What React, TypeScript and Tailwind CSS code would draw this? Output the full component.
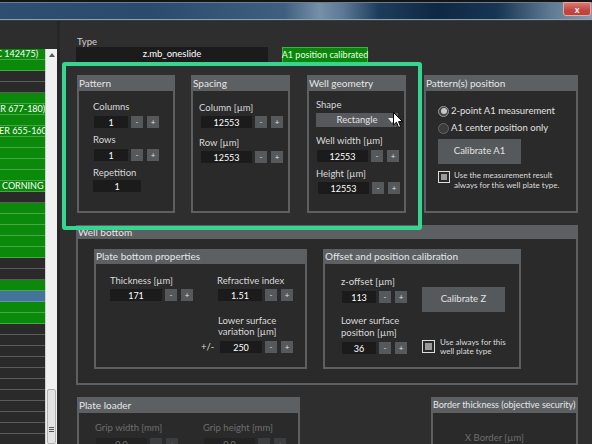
import React from "react";

const FONT = { fontFamily: '"Lato", "Noto Sans", "Liberation Sans", sans-serif' };

function Btn({ c, dim }: { c: string; dim?: boolean }) {
  return (
    <div
      className={`w-[12px] h-[12px] flex items-center justify-center text-[8px] leading-none ${
        dim ? "bg-[#3b3d3f] text-[#6a6a6a]" : "bg-[#55595c] text-[#e2e2e2]"
      }`}
    >
      {c}
    </div>
  );
}

function Spin({ w, v, dim, nobtn }: { w: string; v: string; dim?: boolean; nobtn?: boolean }) {
  return (
    <div className="flex items-center">
      <div
        className={`${w} h-[12px] flex items-center justify-center text-[9px] leading-none ${
          dim ? "bg-[#232323] text-[#707070]" : "bg-[#1b1b1b] text-white"
        }`}
      >
        {v}
      </div>
      {!nobtn && (
        <>
          <div className="ml-[3px]">
            <Btn c="-" dim={dim} />
          </div>
          <div className="ml-[4px]">
            <Btn c="+" dim={dim} />
          </div>
        </>
      )}
    </div>
  );
}

function Label({ children, className = "", dim }: { children: React.ReactNode; className?: string; dim?: boolean }) {
  return (
    <div className={`h-[12px] leading-[12px] text-[9.5px] whitespace-nowrap ${dim ? "text-[#6e6e6e]" : "text-[#d9d9d9]"} ${className}`}>
      {children}
    </div>
  );
}

function Group({
  title,
  hh,
  className,
  bodyClass = "",
  titleClass = "text-[10px]",
  children,
}: {
  title: string;
  hh: string;
  className: string;
  bodyClass?: string;
  titleClass?: string;
  children?: React.ReactNode;
}) {
  return (
    <div className={`flex flex-col bg-[#5c6063] px-[2px] pb-[2px] ${className}`}>
      <div className={`${hh} ${titleClass} shrink-0 text-[#e6e6e6] flex items-center whitespace-nowrap overflow-hidden`}>
        {title}
      </div>
      <div className={`flex-1 bg-[#2a2a2a] ${bodyClass}`}>{children}</div>
    </div>
  );
}

function Check({ size }: { size: string }) {
  return (
    <div className={`${size} shrink-0 border border-[#dcdcdc] p-[2px] bg-[#2a2a2a]`}>
      <div className="w-full h-full bg-[#9a9a9a]" />
    </div>
  );
}

type Row = { t: "g" | "d" | "b"; s?: string; c?: string };
const rows: Row[] = [
  { t: "g", s: "C 142475)", c: "-ml-[4px]" },
  { t: "g" },
  { t: "d" },
  { t: "d" },
  { t: "g" },
  { t: "g", s: "ER 677-180)", c: "-ml-[5px]" },
  { t: "g" },
  { t: "g", s: "ER 655-160)", c: "-ml-[1px]" },
  { t: "g" },
  { t: "g" },
  { t: "g" },
  { t: "g" },
  { t: "g", s: "CORNING 3603", c: "ml-[2px]" },
  { t: "d" },
  { t: "g" },
  { t: "g" },
  { t: "g" },
  { t: "g" },
  { t: "g" },
  { t: "d" },
  { t: "d" },
  { t: "g" },
  { t: "b" },
  { t: "g" },
  { t: "g" },
  ...Array.from({ length: 12 }, () => ({ t: "d" as const })),
];

export default function App() {
  return (
    <div style={FONT} className="w-[592px] h-[444px] relative overflow-hidden bg-[#2d2d2d] flex flex-col">
      {/* title bar */}
      <div className="h-[21px] shrink-0 flex flex-col bg-[#151515]">
        <div className="h-[2px] bg-[#141414]" />
        <div className="h-[1px] bg-[#6a7f92]" />
        <div className="flex-1 relative bg-[linear-gradient(90deg,#2e4f72_0%,#2a4b6e_25%,#3f5f80_48%,#7690a8_54%,#5b7895_58%,#1d3c5c_64%,#0e2843_74%,#173654_84%,#5f7a93_93%,#869cb1_100%)]">
          <div className="absolute right-[1px] top-[-1px] w-[28px] h-[14px] rounded-b-[3px] border border-[#e8a8a2] bg-[linear-gradient(180deg,#d77a72_0%,#c2463e_60%,#b8443d_100%)] flex items-center justify-center text-[9px] leading-none font-bold text-white">
            x
          </div>
        </div>
        <div className="h-[1px] bg-[#8ea1b2]" />
        <div className="h-[1px] bg-[#3a3a3a]" />
      </div>

      <div className="flex-1 flex min-h-0">
        {/* left list + scrollbar */}
        <div className="w-[57px] shrink-0 pt-[28px] relative">
          <div className="w-[45px] h-full overflow-hidden">
            {rows.map((r, i) => (
              <div
                key={i}
                className={`h-[11px] border-b overflow-hidden whitespace-nowrap text-[9px] leading-[10px] text-white ${
                  r.t === "g"
                    ? "bg-[#0a890a] border-[#45a845]"
                    : r.t === "b"
                    ? "bg-[#45749b] border-[#6890b0]"
                    : "bg-[#2a2a2a] border-[#5c5c5c]"
                }`}
              >
                {r.s && <span className={`inline-block ${r.c}`}>{r.s}</span>}
              </div>
            ))}
          </div>
          {/* vertical scrollbar lying on the list's right edge */}
          <div className="absolute left-[45px] top-[28px] bottom-0 w-[12px] flex flex-col bg-[#f0f0f0] border-l border-[#cfcfcf]">
            <div className="h-[11px] shrink-0 flex items-center justify-center">
              <svg width="6" height="4" viewBox="0 0 6 4">
                <path d="M0 4 L3 0 L6 4 Z" fill="#555" />
              </svg>
            </div>
            <div className="flex-1" />
            <div className="h-[55px] shrink-0 mx-[1px] bg-[#e2e2e2] border border-[#b0b0b0] rounded-[2px] flex flex-col items-center justify-end pb-[11px] gap-[1px]">
              <div className="w-[5px] h-[1px] bg-[#555]" />
              <div className="w-[5px] h-[1px] bg-[#555]" />
              <div className="w-[5px] h-[1px] bg-[#555]" />
            </div>
          </div>
        </div>

        {/* main */}
        <div className="flex-1 min-w-0 pl-[16px] pt-[15px] flex flex-col bg-[#2e2e2e] border-l-[3px] border-[#262626]">
          <div className="h-[11px] leading-[11px] text-[9.5px] text-[#cfcfcf] ml-[1px]">Type</div>
          <div className="flex items-start">
            <div className="w-[192px] h-[15px] bg-[#1b1b1b] text-[9.5px] text-white flex items-center justify-center">
              z.mb_oneslide
            </div>
            <div className="ml-[14px] w-[86px] h-[16px] bg-[#0a870a] border border-[#3bb43b] text-[9px] text-[#e8ffe8] flex items-center justify-center whitespace-nowrap">
              A1 position calibrated
            </div>
          </div>

          {/* top groups */}
          <div className="mt-[12px] flex items-start">
            <Group title="Pattern" hh="h-[16px]" className="ml-[1px] w-[98px] h-[138px]" bodyClass="pl-[14px] pt-[10px] flex flex-col">
              <Label>Columns</Label>
              <div className="mt-[3px] ml-[1px]">
                <Spin w="w-[34px]" v="1" />
              </div>
              <Label className="mt-[6px]">Rows</Label>
              <div className="mt-[3px] ml-[1px]">
                <Spin w="w-[34px]" v="1" />
              </div>
              <Label className="mt-[6px]">Repetition</Label>
              <div className="mt-[1px]">
                <Spin w="w-[48px]" v="1" nobtn />
              </div>
            </Group>

            <Group title="Spacing" hh="h-[16px]" className="ml-[16px] w-[99px] h-[138px]" bodyClass="pl-[6px] pt-[11px] flex flex-col">
              <Label>Column [µm]</Label>
              <div className="mt-[2px] ml-[2px]">
                <Spin w="w-[51px]" v="12553" />
              </div>
              <Label className="mt-[9px]">Row [µm]</Label>
              <div className="mt-[2px] ml-[2px]">
                <Spin w="w-[51px]" v="12553" />
              </div>
            </Group>

            <Group title="Well geometry" hh="h-[16px]" className="ml-[17px] w-[99px] h-[138px]" bodyClass="pl-[7px] pt-[8px] flex flex-col">
              <Label>Shape</Label>
              <div className="mt-[2px] w-[82px] h-[14px] bg-[#55595c] relative flex items-center justify-center text-[9.5px] text-[#e2e2e2]">
                Rectangle
                <svg className="absolute right-[2px] top-[5px]" width="8" height="5" viewBox="0 0 8 5">
                  <path d="M0 0 L8 0 L4 5 Z" fill="#f2f2f2" />
                </svg>
              </div>
              <Label className="mt-[8px]">Well width [µm]</Label>
              <div className="mt-[3px] ml-[1px]">
                <Spin w="w-[51px]" v="12553" />
              </div>
              <Label className="mt-[6px]">Height [µm]</Label>
              <div className="mt-[2px] ml-[2px]">
                <Spin w="w-[51px]" v="12553" />
              </div>
            </Group>

            <Group title="Pattern(s) position" hh="h-[16px]" className="ml-[18px] w-[154px] h-[138px]" bodyClass="pl-[12px] pt-[14px] flex flex-col">
              <div className="h-[12px] flex items-center">
                <div className="w-[11px] h-[11px] rounded-full border border-[#9a9a9a] bg-[#444] flex items-center justify-center">
                  <div className="w-[6px] h-[6px] rounded-full bg-[#c8c8c8]" />
                </div>
                <span className="ml-[2px] text-[9.5px] text-[#e0e0e0] whitespace-nowrap">2-point A1 measurement</span>
              </div>
              <div className="mt-[5px] h-[12px] flex items-center">
                <div className="w-[11px] h-[11px] rounded-full border border-[#666] bg-[#3c3c3c]" />
                <span className="ml-[2px] text-[9.5px] text-[#e0e0e0] whitespace-nowrap">A1 center position only</span>
              </div>
              <div className="mt-[5px] w-[83px] h-[25px] bg-[#55595c] flex items-center justify-center text-[9.5px] text-[#e2e2e2]">
                Calibrate A1
              </div>
              <div className="mt-[7px] flex items-start">
                <Check size="w-[12px] h-[12px]" />
                <div className="ml-[4px] -mt-[1px] text-[8px] leading-[10px] text-[#dcdcdc] whitespace-nowrap">
                  Use the measurement result
                  <br />
                  always for this well plate type.
                </div>
              </div>
            </Group>
          </div>

          {/* well bottom */}
          <Group title="Well bottom" hh="h-[14px]" className="mt-[12px] w-[502px] h-[160px] shrink-0" bodyClass="pl-[16px] pt-[10px] flex items-start">
            <Group title="Plate bottom properties" hh="h-[15px]" className="w-[213px] h-[120px]" bodyClass="pl-[14px] pt-[11px] flex">
              <div className="w-[107px] flex flex-col">
                <Label>Thickness [µm]</Label>
                <div className="mt-[2px]">
                  <Spin w="w-[52px]" v="171" />
                </div>
              </div>
              <div className="flex flex-col">
                <Label>Refractive index</Label>
                <div className="mt-[2px] ml-[1px]">
                  <Spin w="w-[44px]" v="1.51" />
                </div>
                <div className="mt-[14px] ml-[1px] text-[9.5px] leading-[11px] text-[#d9d9d9]">
                  Lower surface
                  <br />
                  variation [µm]
                </div>
                <div className="mt-[3px] -ml-[16px] flex items-center">
                  <span className="w-[19px] text-[9.5px] text-[#d9d9d9]">+/-</span>
                  <Spin w="w-[42px]" v="250" />
                </div>
              </div>
            </Group>

            <Group title="Offset and position calibration" hh="h-[15px]" className="ml-[16px] w-[198px] h-[120px]" bodyClass="pl-[16px] pt-[12px] flex">
              <div className="w-[81px] flex flex-col">
                <Label>z-offset [µm]</Label>
                <div className="mt-[3px] ml-[1px]">
                  <Spin w="w-[34px]" v="113" />
                </div>
                <div className="mt-[12px] text-[9.5px] leading-[12px] text-[#d9d9d9]">
                  Lower surface
                  <br />
                  position [µm]
                </div>
                <div className="mt-[3px] ml-[1px]">
                  <Spin w="w-[34px]" v="36" />
                </div>
              </div>
              <div className="flex flex-col pt-[11px]">
                <div className="w-[83px] h-[25px] bg-[#55595c] flex items-center justify-center text-[9.5px] text-[#e2e2e2]">
                  Calibrate Z
                </div>
                <div className="mt-[28px] flex items-start">
                  <Check size="w-[13px] h-[13px]" />
                  <div className="ml-[5px] -mt-[2px] text-[8px] leading-[9px] text-[#dcdcdc] whitespace-nowrap">
                    Use always for this
                    <br />
                    well plate type
                  </div>
                </div>
              </div>
            </Group>
          </Group>

          {/* bottom row */}
          <div className="mt-[12px] w-[502px] flex items-start shrink-0">
            <Group title="Plate loader" hh="h-[16px]" className="ml-[1px] w-[223px] h-[80px]" bodyClass="pl-[16px] pt-[9px] flex">
              <div className="w-[108px] flex flex-col">
                <Label dim>Grip width [mm]</Label>
                <div className="mt-[4px] ml-[1px]">
                  <Spin w="w-[51px]" v="0.0" dim />
                </div>
              </div>
              <div className="flex flex-col">
                <Label dim>Grip height [mm]</Label>
                <div className="mt-[4px] ml-[1px]">
                  <Spin w="w-[51px]" v="0.0" dim />
                </div>
              </div>
            </Group>
            <Group
              title="Border thickness (objective security)"
              hh="h-[16px]"
              titleClass="text-[9px]"
              className="ml-auto w-[147px] h-[80px]"
              bodyClass="pl-[32px] pt-[19px]"
            >
              <Label dim>X Border [µm]</Label>
            </Group>
          </div>
        </div>
      </div>

      {/* highlight frame */}
      <div className="absolute left-[62px] top-[62px] w-[360px] h-[168px] border-[4px] border-[#37d690] rounded-[3px] pointer-events-none" />

      {/* mouse cursor */}
      <svg className="absolute left-[393px] top-[112px]" width="11" height="17" viewBox="0 0 11 17">
        <path d="M0.5 0.5 L0.5 13 L3.5 10.2 L5.6 15.5 L7.6 14.6 L5.6 9.6 L9.6 9.6 Z" fill="#ffffff" stroke="#000" strokeWidth="1" strokeLinejoin="round" />
      </svg>
    </div>
  );
}
